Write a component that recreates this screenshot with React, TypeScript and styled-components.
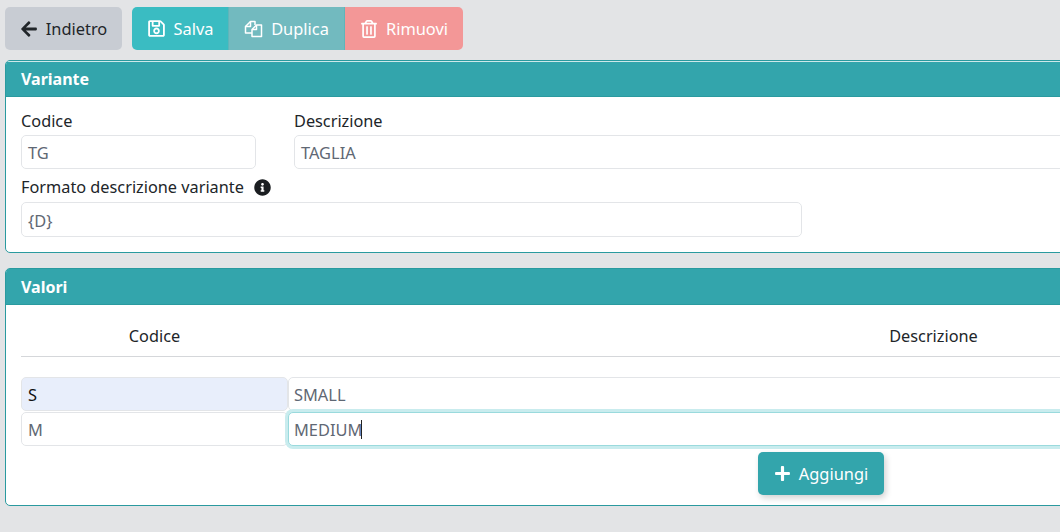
import React from "react";
import styled, { createGlobalStyle } from "styled-components";
import { FaArrowLeft, FaRegSave, FaRegTrashAlt, FaInfoCircle, FaPlus } from "react-icons/fa";

const Global = createGlobalStyle`
  html, body { margin: 0; padding: 0; background: #e3e4e6; overflow: hidden; height: 100%; }
  body { font-family: "Noto Sans", "Open Sans", sans-serif; font-size: 16px; color: #212529; }
`;

const Page = styled.div`
  width: 1590px;
  padding: 7px 0 0 5px;
`;

const Toolbar = styled.div`
  display: flex;
  gap: 10px;
  margin-bottom: 10px;
`;

const Group = styled.div`
  display: flex;
  border-radius: 5px;
  overflow: hidden;
`;

const Button = styled.button<{ $bg: string; $fg?: string; $w: number }>`
  display: flex;
  align-items: center;
  justify-content: center;
  gap: 8px;
  width: ${(p) => p.$w}px;
  height: 43px;
  padding: 0;
  border: 0;
  background: ${(p) => p.$bg};
  color: ${(p) => p.$fg ?? "#fff"};
  font-family: inherit;
  font-size: 16.4px;
`;

const BackButton = styled(Button)`
  border-radius: 5px;
`;

const Divider = styled.div`
  width: 1px;
  background: #5fb5ba;
`;

const Card = styled.section<{ $h: number }>`
  height: ${(p) => p.$h}px;
  box-sizing: border-box;
  background: #fff;
  border: 1px solid #2a9a9f;
  border-radius: 5px;
  overflow: hidden;
  margin-bottom: 15px;
`;

const CardHeader = styled.h2<{ $lined?: boolean }>`
  margin: 0;
  height: 36px;
  box-sizing: border-box;
  display: flex;
  align-items: center;
  padding-left: 15px;
  background: #33a5ac;
  border-top: 1px solid ${(p) => (p.$lined ? "#cfe9ea" : "#33a5ac")};
  border-bottom: 1px solid #2a9a9f;
  color: #fff;
  font-size: 16px;
  font-weight: 700;
`;

const FormBody = styled.div`
  padding: 14px 15px 0;
`;

const FormRow = styled.div`
  display: grid;
  grid-template-columns: 235px 1fr;
  column-gap: 38px;
  margin-bottom: 8px;
`;

const Label = styled.label`
  display: flex;
  align-items: center;
  gap: 10px;
  height: 20px;
  margin-bottom: 4px;
  font-size: 16.3px;
  line-height: 20px;
`;

const FormatLabel = styled(Label)`
  margin-bottom: 5px;
`;

const Field = styled.div<{ $w?: number; $fill?: string; $dark?: boolean; $focus?: boolean; $h?: number }>`
  box-sizing: border-box;
  display: flex;
  align-items: center;
  height: ${(p) => p.$h ?? 34}px;
  width: ${(p) => (p.$w ? `${p.$w}px` : "100%")};
  padding: 1px 6px 0;
  background: ${(p) => p.$fill ?? "#fff"};
  border: 1px solid ${(p) => (p.$focus ? "#9adadd" : "#e3e5e8")};
  border-radius: 5px;
  color: ${(p) => (p.$dark ? "#111" : "#5f6874")};
  font-size: 16.4px;
  ${(p) => (p.$focus ? "box-shadow: 0 0 0 3px #c9ecee; position: relative;" : "")}
`;

const ValueField = styled(Field)`
  padding-left: 5px;
`;

const Caret = styled.span`
  display: inline-block;
  width: 1px;
  height: 19px;
  margin-left: -1px;
  background: #222;
`;

const TableBody = styled.div`
  padding: 0 15px;
`;

const TableHead = styled.div`
  display: grid;
  grid-template-columns: 267px 1fr;
  height: 52px;
  align-items: end;
  padding-bottom: 10px;
  box-sizing: border-box;
  border-bottom: 1px solid #d5d7da;
  margin-bottom: 20px;
  text-align: center;
  font-size: 16.3px;
  line-height: 20px;
`;

const ValueRow = styled.div`
  display: grid;
  grid-template-columns: 267px 1fr;
  margin-bottom: 1px;
`;

const AddWrap = styled.div`
  padding: 5px 0 0 737px;
`;

const AddButton = styled(Button)`
  border-radius: 5px;
  box-shadow: 2px 3px 6px rgba(0, 0, 0, 0.18);
`;

const CopyIcon = () => (
  <svg width="19" height="18" viewBox="0 0 19 18" fill="none" stroke="currentColor" strokeWidth="1.5" strokeLinejoin="round">
    <path d="M8 13H1.5V6.5L6.5 1.5H11V5" />
    <path d="M6.5 1.5V6.5H1.5" />
    <path d="M12.5 5H17.5V16.5H8V9.5Z" />
    <path d="M12.5 5V9.5H8" />
  </svg>
);

export default function App() {
  return (
    <>
      <Global />
      <Page>
        <Toolbar>
          <BackButton $bg="#c8ccd3" $fg="#212529" $w={117}>
            <FaArrowLeft size={18} />
            Indietro
          </BackButton>
          <Group>
            <Button $bg="#3abcc2" $w={96}>
              <FaRegSave size={19} />
              Salva
            </Button>
            <Divider />
            <Button $bg="#72babf" $w={115}>
              <CopyIcon />
              Duplica
            </Button>
            <Divider />
            <Button $bg="#f39797" $w={118}>
              <FaRegTrashAlt size={18} />
              Rimuovi
            </Button>
          </Group>
        </Toolbar>

        <Card $h={193}>
          <CardHeader $lined>Variante</CardHeader>
          <FormBody>
            <FormRow>
              <div>
                <Label>Codice</Label>
                <Field>TG</Field>
              </div>
              <div>
                <Label>Descrizione</Label>
                <Field>TAGLIA</Field>
              </div>
            </FormRow>
            <FormatLabel>
              Formato descrizione variante
              <FaInfoCircle size={17} color="#1b1e21" />
            </FormatLabel>
            <Field $w={781} $h={35}>{"{D}"}</Field>
          </FormBody>
        </Card>

        <Card $h={238}>
          <CardHeader>Valori</CardHeader>
          <TableBody>
            <TableHead>
              <div>Codice</div>
              <div>Descrizione</div>
            </TableHead>
            <ValueRow>
              <Field $fill="#e8eefb" $dark>S</Field>
              <ValueField>SMALL</ValueField>
            </ValueRow>
            <ValueRow>
              <Field>M</Field>
              <ValueField $focus>
                MEDIUM
                <Caret />
              </ValueField>
            </ValueRow>
            <AddWrap>
              <AddButton $bg="#33a5ac" $w={126}>
                <FaPlus size={17} />
                Aggiungi
              </AddButton>
            </AddWrap>
          </TableBody>
        </Card>
      </Page>
    </>
  );
}
